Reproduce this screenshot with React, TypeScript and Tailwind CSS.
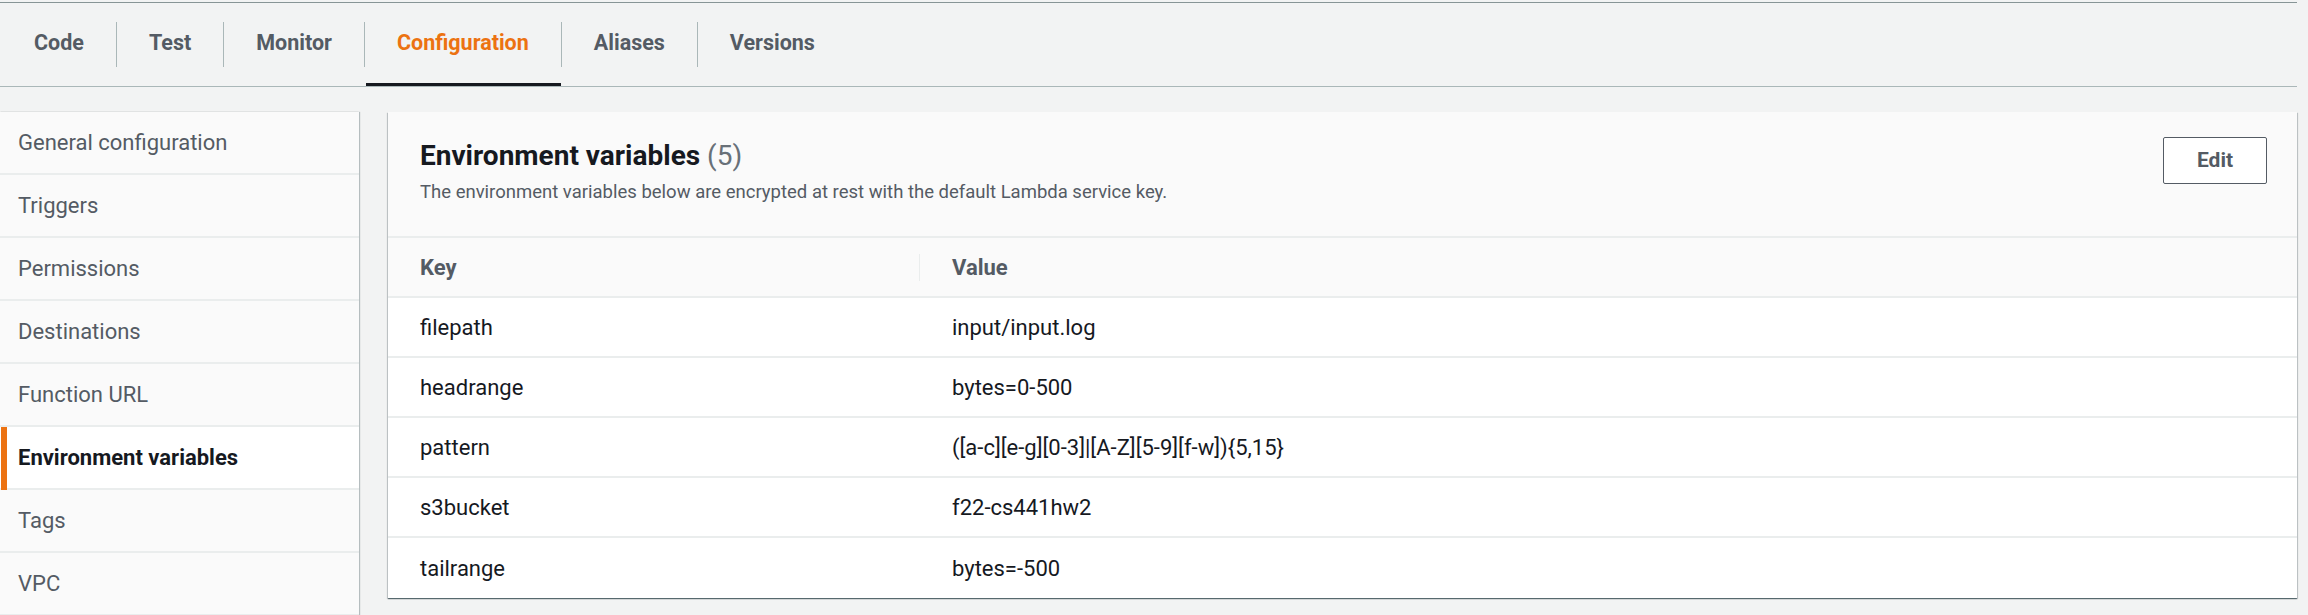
const tabs = ['Code', 'Test', 'Monitor', 'Configuration', 'Aliases', 'Versions']

const sections = [
  'General configuration',
  'Triggers',
  'Permissions',
  'Destinations',
  'Function URL',
  'Environment variables',
  'Tags',
  'VPC',
]

const envVars = [
  { key: 'filepath', value: 'input/input.log' },
  { key: 'headrange', value: 'bytes=0-500' },
  { key: 'pattern', value: '([a-c][e-g][0-3]|[A-Z][5-9][f-w]){5,15}' },
  { key: 's3bucket', value: 'f22-cs441hw2' },
  { key: 'tailrange', value: 'bytes=-500' },
]

export default function App() {
  const activeTab = 'Configuration'
  const activeSection = 'Environment variables'

  return (
    <div className="w-[2308px] h-[615px] overflow-hidden bg-[#f2f3f3] font-['Roboto','Liberation_Sans',sans-serif]">
      {/* Tab strip */}
      <div className="pt-[2px] pr-[11px]">
        <div className="flex h-[85px] items-stretch border-t border-b border-t-[#879596] border-b-[#aab7b8] pl-[2px]">
          {tabs.map((tab, i) => (
            <div key={tab} className="flex items-center">
              {i > 0 && <span className="h-[45px] w-px bg-[#aab7b8]" />}
              <div className="relative flex h-full items-center px-8 pb-[2px]">
                <span
                  className={
                    'text-[21.5px] font-bold ' +
                    (tab === activeTab ? 'text-[#ec7211]' : 'text-[#545b64]')
                  }
                >
                  {tab}
                </span>
                {tab === activeTab && (
                  <span className="absolute bottom-0 left-[1px] right-0 h-[3px] bg-[#16191f]" />
                )}
              </div>
            </div>
          ))}
        </div>
      </div>

      <div className="mt-[25px] flex pr-[11px]">
        {/* Side navigation */}
        <nav className="w-[359px] shrink-0 bg-[#fafafa] shadow-[1px_0_1px_rgba(0,28,36,0.25),-1px_0_1px_rgba(0,28,36,0.15)]">
          {sections.map((s) => {
            const active = s === activeSection
            return (
              <div
                key={s}
                className={
                  'relative flex h-[63px] items-center border-b-2 border-[#eaeded] pl-[18px] text-[22px] ' +
                  (active ? 'bg-white font-bold text-[#16191f]' : 'text-[#545b64]')
                }
              >
                {active && <span className="absolute left-[1px] top-0 bottom-[-2px] w-[6px] bg-[#ec7211]" />}
                {s}
              </div>
            )
          })}
        </nav>

        {/* Environment variables panel */}
        <section className="ml-[29px] h-[486px] flex-1 bg-white shadow-[0_1px_1px_rgba(0,28,36,0.5),1px_1px_1px_rgba(0,28,36,0.15),-1px_1px_1px_rgba(0,28,36,0.15)]">
          <div className="flex h-[126px] justify-between border-b-2 border-[#eaeded] bg-[#fafafa] pl-8 pr-[30px]">
            <div className="pt-[28px]">
              <h2 className="text-[28px] leading-[32px] font-bold text-[#16191f]">
                Environment variables <span className="font-normal text-[#687078]">(5)</span>
              </h2>
              <p className="mt-[8px] text-[18.5px] leading-[24px] text-[#545b64]">
                The environment variables below are encrypted at rest with the default Lambda service key.
              </p>
            </div>
            <div className="pt-[25px]">
              <button className="h-[47px] w-[104px] rounded-[2px] border border-[#545b64] bg-white text-[21px] font-bold text-[#545b64]">
                Edit
              </button>
            </div>
          </div>

          <div className="flex h-[60px] items-center border-b-2 border-[#eaeded] bg-[#fafafa] text-[22px] font-bold text-[#545b64]">
            <div className="w-[531px] px-8">Key</div>
            <span className="h-[27px] w-px bg-[#eaeded]" />
            <div className="px-8">Value</div>
          </div>

          {envVars.map((v, i) => (
            <div
              key={v.key}
              className={
                'flex h-[60px] items-center text-[22px] text-[#16191f] ' +
                (i < envVars.length - 1 ? 'border-b-2 border-[#eaeded]' : '')
              }
            >
              <div className="w-[532px] px-8">{v.key}</div>
              <div className="px-8">{v.value}</div>
            </div>
          ))}
        </section>
      </div>
    </div>
  )
}
